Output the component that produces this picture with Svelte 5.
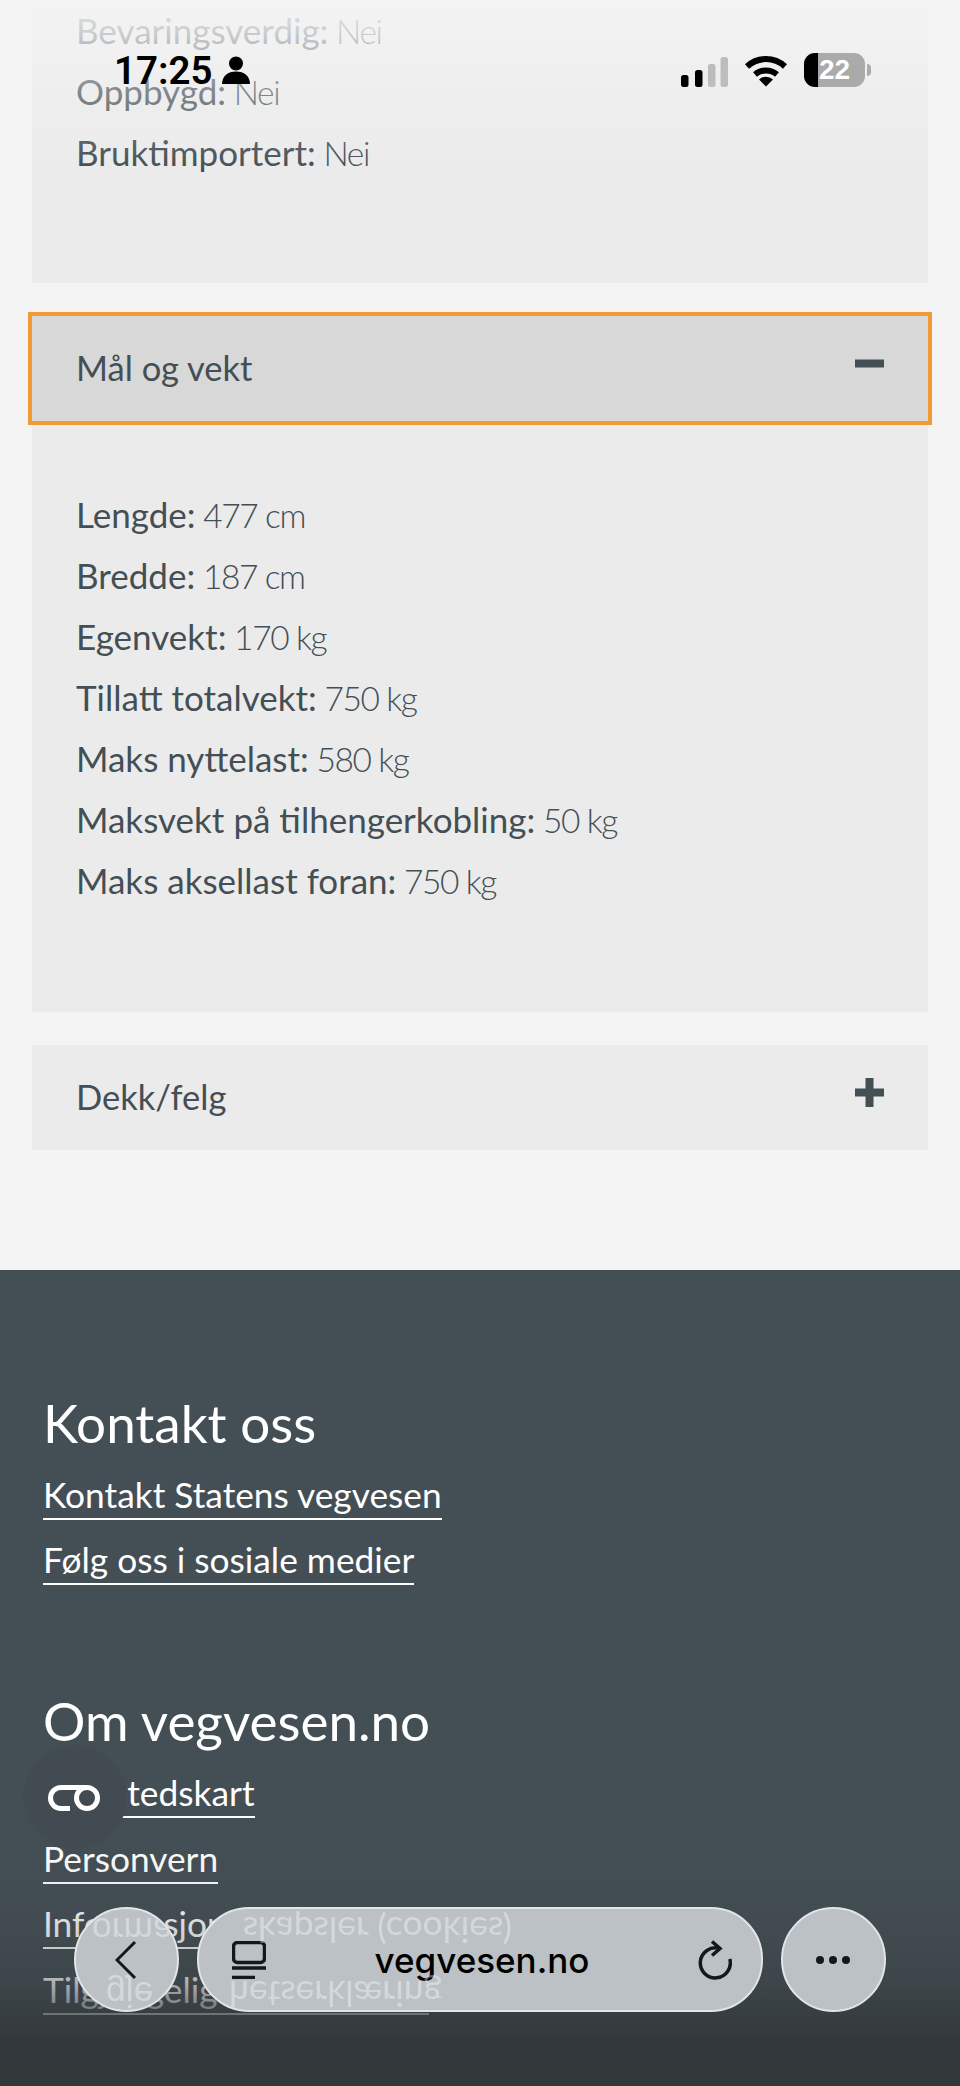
<script>
const history = [
  ['Bevaringsverdig', 'Nei'],
  ['Oppbygd', 'Nei'],
  ['Bruktimportert', 'Nei']
]
const measures = [
  ['Lengde', '477 cm'],
  ['Bredde', '187 cm'],
  ['Egenvekt', '170 kg'],
  ['Tillatt totalvekt', '750 kg'],
  ['Maks nyttelast', '580 kg'],
  ['Maksvekt på tilhengerkobling', '50 kg'],
  ['Maks aksellast foran', '750 kg']
]
const aboutLinks = ['Nettstedskart', 'Personvern', 'Informasjonskapsler (cookies)', 'Tilgjengelighetserklæring']
</script>

<div class="page">
  <main>
    <section class="panel">
      <div class="rows cut">
        {#each history as [label, value]}
          <p><span class="label">{label}:</span> {value}</p>
        {/each}
      </div>
    </section>

    <section class="panel">
      <button class="head focused">
        <span>Mål og vekt</span>
        <svg class="sign" viewBox="0 0 29 29"><rect x="0" y="10.5" width="29" height="8" /></svg>
      </button>
      <div class="rows">
        {#each measures as [label, value]}
          <p><span class="label">{label}:</span> {value}</p>
        {/each}
      </div>
    </section>

    <section class="panel">
      <button class="head">
        <span>Dekk/felg</span>
        <svg class="sign" viewBox="0 0 29 29"><rect x="0" y="10.5" width="29" height="8" /><rect x="10.5" y="0" width="8" height="29" /></svg>
      </button>
    </section>
  </main>

  <footer>
    <h2>Kontakt oss</h2>
    <ul>
      <li><a href="#kontakt">Kontakt Statens vegvesen</a></li>
      <li><a href="#sosiale">Følg oss i sosiale medier</a></li>
    </ul>
    <h2 class="second">Om vegvesen.no</h2>
    <ul>
      {#each aboutLinks as link}
        <li><a href="#om">{link}</a></li>
      {/each}
    </ul>
  </footer>

  <div class="fade-top"></div>
  <div class="fade-bottom"></div>

  <div class="status">
    <div class="clock">
      <span>17:25</span>
      <svg width="28" height="28" viewBox="0 0 28 28"><circle cx="14" cy="7.5" r="7" /><path d="M0 28c0-8 6-12.500 14-12.500S28 20 28 28z" /></svg>
    </div>
    <div class="indicators">
      <svg width="47" height="30" viewBox="0 0 47 30">
        <rect x="0" y="18" width="7.500" height="12" rx="2.500" />
        <rect x="14" y="13" width="7.500" height="17" rx="2.500" />
        <rect class="off" x="27" y="7" width="7.500" height="23" rx="2.500" />
        <rect class="off" x="39.500" y="0" width="7.500" height="30" rx="2.500" />
      </svg>
      <svg class="wifi" width="42" height="31" viewBox="0 0 42 31">
        <path d="M2 10.500a28 28 0 0 1 38 0" />
        <path d="M10 18.500a17 17 0 0 1 22 0" />
        <path d="M21 30.500l-7-7a10 10 0 0 1 14 0z" class="solid" />
      </svg>
      <div class="battery"><span>22</span></div>
    </div>
  </div>

  <svg class="fab-icon" width="52" height="26" viewBox="0 0 52 26">
    <circle cx="39" cy="13" r="10.500" />
    <path d="M39 2.500H13a10.500 10.500 0 0 0 0 21h9" />
  </svg>
  <div class="fab"></div>

  <nav class="browser">
    <button class="round">
      <span class="ghost g1">orma</span>
      <span class="ghost g2">gje</span>
      <svg width="22" height="40" viewBox="0 0 22 40"><path d="M20 2L2 20l18 18" /></svg>
    </button>
    <div class="url">
      <span class="ghost u1">skapsler (cookies)</span>
      <span class="ghost u2">hetserklæring</span>
      <svg class="tabs" width="34" height="38" viewBox="0 0 34 38">
        <rect x="1.500" y="1.500" width="31" height="20" rx="4" />
        <path d="M0 27h34M0 36.500h23" />
      </svg>
      <strong>vegvesen.no</strong>
      <svg class="reload" width="34" height="40" viewBox="0 0 34 40">
        <path d="M21.500 8.500A15 15 0 1 0 31.800 19" />
        <path d="M14 1.500l8 7-8 7" />
      </svg>
    </div>
    <button class="round">
      <svg width="34" height="8" viewBox="0 0 34 8"><circle cx="4" cy="4" r="4" /><circle cx="17" cy="4" r="4" /><circle cx="30" cy="4" r="4" /></svg>
    </button>
  </nav>
</div>

<style>
:global(body) {
  margin: 0;
  background: #f4f4f4;
}

.page {
  position: relative;
  height: 2086px;
  overflow: hidden;
  background: #f4f4f4;
  color: #444f55;
  font-family: Lato, "Open Sans", sans-serif;
}

main {
  display: flex;
  flex-direction: column;
  gap: 33px;
  padding: 0 32px;
  height: 1270px;
  box-sizing: border-box;
}

.panel {
  background: #ebebeb;
}

.head {
  display: flex;
  justify-content: space-between;
  align-items: center;
  width: 100%;
  height: 105px;
  padding: 0 44px 0 44px;
  border: 0;
  background: none;
  color: inherit;
  font: inherit;
  font-size: 34.5px;
  text-align: left;
}

.head span {
  margin-bottom: 3px;
}

.focused {
  background: #d8d8d8;
  outline: 4px solid #f09a35;
}

.sign {
  width: 29px;
  height: 29px;
  margin-bottom: 10px;
  fill: #444f55;
}

.rows {
  padding: 64px 44px 100px;
}

.rows.cut {
  padding-top: 1px;
  padding-bottom: 99px;
}

.rows p {
  margin: 0;
  font-size: 33.5px;
  font-weight: 300;
  letter-spacing: -1.4px;
  line-height: 61px;
}

.label {
  font-size: 35px;
  font-weight: 400;
  letter-spacing: 0;
  line-height: 1;
}

footer {
  height: 816px;
  box-sizing: border-box;
  padding: 124px 43px 0;
  background: #444f55;
  color: #fff;
}

h2 {
  margin: 0 0 2px;
  font-size: 53px;
  font-weight: 400;
  line-height: 58px;
}

h2.second {
  margin-top: 107px;
}

ul {
  margin: 0;
  padding: 0;
  list-style: none;
}

li {
  display: flex;
  align-items: flex-end;
  height: 65.7px;
}

a {
  display: inline-block;
  padding-bottom: 1px;
  color: #fff;
  text-decoration: none;
  font-size: 35.3px;
  line-height: 44px;
  border-bottom: 2px solid #fff;
}

.fade-top,
.fade-bottom {
  position: absolute;
  left: 0;
  right: 0;
  pointer-events: none;
}

.fade-top {
  top: 0;
  height: 170px;
  background: linear-gradient(rgba(244, 244, 244, 0.92), rgba(244, 244, 244, 0.77) 32px, rgba(244, 244, 244, 0.34) 93px, rgba(244, 244, 244, 0));
}

.fade-bottom {
  bottom: 0;
  height: 256px;
  background: linear-gradient(rgba(50, 55, 58, 0), rgba(50, 55, 58, 0.1) 27%, rgba(50, 55, 58, 0.38) 59%, rgba(50, 55, 58, 0.95) 82%, #32373a);
}

.status {
  position: absolute;
  top: 53px;
  left: 114px;
  right: 95px;
  display: flex;
  justify-content: space-between;
  align-items: flex-start;
  color: #000;
}

.clock {
  display: flex;
  align-items: center;
  gap: 10px;
  height: 34px;
  font-family: Roboto, sans-serif;
  font-size: 38.5px;
  font-weight: 600;
}

.indicators {
  display: flex;
  align-items: flex-end;
  gap: 17px;
  height: 34px;
}

.indicators svg {
  display: block;
}

.indicators .off {
  fill: #bdbdbd;
}

.wifi path {
  fill: none;
  stroke: #000;
  stroke-width: 6;
}

.wifi path.solid {
  fill: #000;
  stroke: none;
}

.battery {
  position: relative;
  width: 61px;
  height: 34px;
  border-radius: 11px;
  background: linear-gradient(90deg, #000 14px, #aaa 14px);
  color: #fff;
  font-family: "Liberation Sans", sans-serif;
  font-size: 28px;
  font-weight: 700;
  line-height: 34px;
  text-align: center;
}

.battery::after {
  content: "";
  position: absolute;
  top: 11px;
  right: -6px;
  width: 4px;
  height: 12px;
  border-radius: 0 4px 4px 0;
  background: #aaa;
}

.fab {
  position: absolute;
  left: 23px;
  top: 1745px;
  width: 104px;
  height: 104px;
  border-radius: 50%;
  background: #414b51;
}

.fab-icon {
  position: absolute;
  left: 48px;
  top: 1785px;
  z-index: 1;
  fill: none;
  stroke: #fff;
  stroke-width: 5;
}

.browser {
  position: absolute;
  left: 74px;
  top: 1907px;
  display: flex;
  gap: 18px;
  height: 105px;
}

.round,
.url {
  position: relative;
  display: flex;
  align-items: center;
  overflow: hidden;
  box-sizing: border-box;
  height: 105px;
  border: 2px solid #e2e5e7;
  background: #bcc1c5;
  color: #000;
}

.round {
  justify-content: center;
  width: 105px;
  padding: 0;
  border-radius: 50%;
}

.round svg {
  position: relative;
  right: 1px;
  fill: #15181a;
  stroke: none;
}

.round svg path {
  fill: none;
  stroke: #15181a;
  stroke-width: 3;
}

.url {
  justify-content: space-between;
  width: 566px;
  padding: 0 29px 0 33px;
  border-radius: 52px;
}

.url strong {
  font-family: Inter, sans-serif;
  font-size: 35px;
  font-weight: 500;
}

.tabs,
.reload {
  fill: none;
  stroke: #15181a;
  stroke-width: 3.500;
}

.ghost {
  position: absolute;
  white-space: nowrap;
  color: #fff;
  opacity: 0.38;
  font-size: 35.5px;
  transform: scaleY(-1);
  filter: blur(0.7px);
}

.u1 {
  right: 249px;
  top: 0;
}

.u2 {
  right: 319px;
  top: 64px;
}

.g1 {
  left: 16px;
  top: 0;
}

.g2 {
  left: 30px;
  top: 64px;
}
</style>
